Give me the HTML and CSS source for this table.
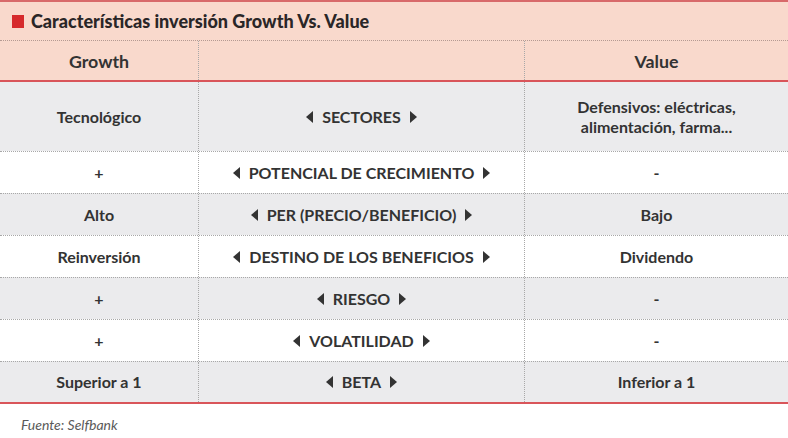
FILE: index.html
```html
<!DOCTYPE html>
<html lang="es">
<head>
<meta charset="utf-8">
<title>Características inversión Growth Vs. Value</title>
<link rel="stylesheet" href="styles.css">
</head>
<body>
<div class="panel">
  <div class="title-band">
    <span class="square"></span>
    <h1 class="title">Características inversión Growth Vs. Value</h1>
  </div>
  <div class="grid">
    <div class="row head">
      <div class="cell">Growth</div>
      <div class="cell mid"></div>
      <div class="cell">Value</div>
    </div>
    <div class="row gray tall">
      <div class="cell">Tecnológico</div>
      <div class="cell mid"><span class="tri left"></span>SECTORES<span class="tri right"></span></div>
      <div class="cell">Defensivos: eléctricas,<br>alimentación, farma...</div>
    </div>
    <div class="row">
      <div class="cell">+</div>
      <div class="cell mid"><span class="tri left"></span>POTENCIAL DE CRECIMIENTO<span class="tri right"></span></div>
      <div class="cell">-</div>
    </div>
    <div class="row gray">
      <div class="cell">Alto</div>
      <div class="cell mid"><span class="tri left"></span>PER (PRECIO/BENEFICIO)<span class="tri right"></span></div>
      <div class="cell">Bajo</div>
    </div>
    <div class="row">
      <div class="cell">Reinversión</div>
      <div class="cell mid"><span class="tri left"></span>DESTINO DE LOS BENEFICIOS<span class="tri right"></span></div>
      <div class="cell">Dividendo</div>
    </div>
    <div class="row gray">
      <div class="cell">+</div>
      <div class="cell mid"><span class="tri left"></span>RIESGO<span class="tri right"></span></div>
      <div class="cell">-</div>
    </div>
    <div class="row">
      <div class="cell">+</div>
      <div class="cell mid"><span class="tri left"></span>VOLATILIDAD<span class="tri right"></span></div>
      <div class="cell">-</div>
    </div>
    <div class="row gray last">
      <div class="cell">Superior a 1</div>
      <div class="cell mid"><span class="tri left"></span>BETA<span class="tri right"></span></div>
      <div class="cell">Inferior a 1</div>
    </div>
  </div>
  <p class="source">Fuente: Selfbank</p>
</div>
</body>
</html>
```
FILE: styles.css
```css
* { box-sizing: border-box; }
html, body { margin: 0; padding: 0; background: #ffffff; }
body { font-family: Lato, "Open Sans", sans-serif; color: #333333; }

.panel { width: 788px; }

.title-band {
  height: 40px;
  background: #f9d9cc;
  border-top: 2px solid #d86a6a;
  display: flex;
  align-items: center;
  padding-left: 12px;
  gap: 7px;
}
.square {
  width: 12px;
  height: 13px;
  background: #d62a2c;
  flex: none;
}
.title {
  margin: 0;
  font-size: 18px;
  font-weight: 900;
  color: #2a2627;
  letter-spacing: 0;
}

.grid { display: flex; flex-direction: column; }
.row {
  display: grid;
  grid-template-columns: 198px 327px 263px;
  height: 42px;
  border-top: 1px dotted #a8a8a8;
  background: #ffffff;
}
.row.gray { background: #ebebed; }
.row.tall { height: 69px; border-top: none; }
.row.head {
  height: 42px;
  background: #f9d9cc;
  border-top: 1px dotted #b49a92;
  border-bottom: 2px solid #d9555a;
}
.row.last { height: 43px; border-bottom: 2px solid #d9555a; }

.cell {
  display: flex;
  align-items: center;
  justify-content: center;
  text-align: center;
  font-weight: 700;
  font-size: 16px;
  line-height: 20px;
}
.row.head .cell { font-size: 17.8px; }
.cell.mid {
  border-left: 1px dotted #a8a8a8;
  border-right: 1px dotted #a8a8a8;
  gap: 9px;
}

.tri {
  width: 0;
  height: 0;
  border-top: 6px solid transparent;
  border-bottom: 6px solid transparent;
  flex: none;
}
.tri.left { border-right: 7px solid #333333; }
.tri.right { border-left: 7px solid #333333; }

.source {
  margin: 0;
  padding: 12px 0 0 21px;
  font-size: 14px;
  font-style: italic;
  font-weight: 400;
  color: #5a5a5a;
}
```
